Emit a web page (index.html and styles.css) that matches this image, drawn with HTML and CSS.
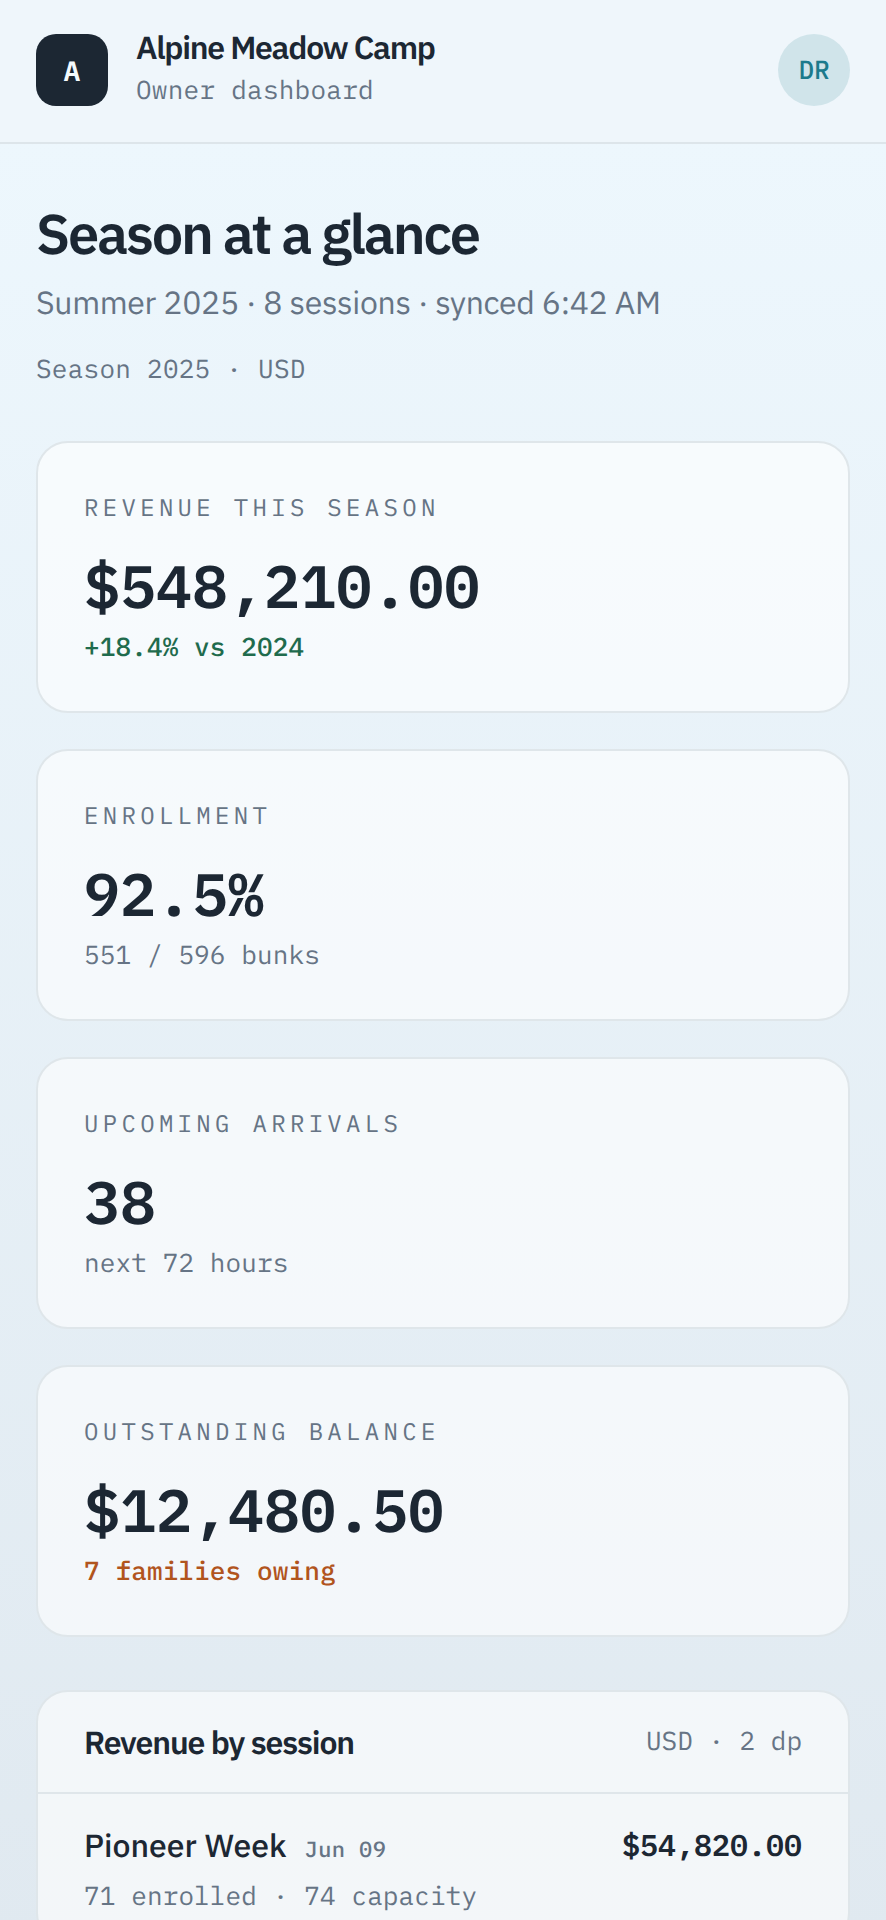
FILE: index.html
```html
<!DOCTYPE html>
<html lang="en">
<head>
  <meta charset="UTF-8">
  <meta name="viewport" content="width=device-width, initial-scale=1.0">
  <title>Alpine Meadow Camp</title>
  <link rel="stylesheet" href="styles.css">
</head>
<body>
  <header class="topbar">
    <div class="brand">
      <div class="brand-mark">A</div>
      <div class="brand-text">
        <div class="brand-name">Alpine Meadow Camp</div>
        <div class="brand-role">Owner dashboard</div>
      </div>
    </div>
    <div class="avatar">DR</div>
  </header>

  <main class="content">
    <section class="intro">
      <h1>Season at a glance</h1>
      <p class="intro-sub">Summer 2025 · 8 sessions · synced 6:42 AM</p>
      <p class="intro-meta">Season 2025 · USD</p>
    </section>

    <section class="stats">
      <div class="card">
        <div class="card-label">REVENUE THIS SEASON</div>
        <div class="card-value">$548,210.00</div>
        <div class="card-note good">+18.4% vs 2024</div>
      </div>
      <div class="card">
        <div class="card-label">ENROLLMENT</div>
        <div class="card-value">92.5%</div>
        <div class="card-note">551 / 596 bunks</div>
      </div>
      <div class="card">
        <div class="card-label">UPCOMING ARRIVALS</div>
        <div class="card-value">38</div>
        <div class="card-note">next 72 hours</div>
      </div>
      <div class="card">
        <div class="card-label">OUTSTANDING BALANCE</div>
        <div class="card-value">$12,480.50</div>
        <div class="card-note warn">7 families owing</div>
      </div>
    </section>

    <section class="panel">
      <div class="panel-head">
        <h2>Revenue by session</h2>
        <span class="panel-meta">USD · 2 dp</span>
      </div>
      <div class="row">
        <div class="row-top">
          <div><span class="row-name">Pioneer Week</span><span class="row-date">Jun 09</span></div>
          <div class="row-amount">$54,820.00</div>
        </div>
        <div class="row-sub">71 enrolled · 74 capacity</div>
      </div>
    </section>
  </main>
</body>
</html>
```

FILE: styles.css
```css
* {
  box-sizing: border-box;
}

html, body {
  margin: 0;
  padding: 0;
}

body {
  min-height: 100vh;
  font-family: "IBM Plex Sans", "Open Sans", sans-serif;
  color: #1c2733;
  background: linear-gradient(180deg, #eef8fe 0%, #e0e9f0 100%);
  text-rendering: geometricPrecision;
}

.topbar {
  display: flex;
  justify-content: space-between;
  align-items: center;
  height: 144px;
  padding: 0 36px 2px;
  background: #eff6fb;
  border-bottom: 2px solid #dde5ea;
}

.brand {
  display: flex;
  align-items: center;
  gap: 28px;
}

.brand-mark {
  width: 72px;
  height: 72px;
  border-radius: 20px;
  background: #1c2733;
  color: #f4fafd;
  display: flex;
  align-items: center;
  justify-content: center;
  font-family: "IBM Plex Mono", "Liberation Mono", monospace;
  font-weight: 600;
  font-size: 28px;
}

.brand-text {
  padding-bottom: 5px;
}

.brand-name {
  font-size: 32px;
  font-weight: 600;
  letter-spacing: -0.04em;
  line-height: 38px;
}

.brand-role {
  margin-top: 7px;
  font-family: "IBM Plex Mono", "Liberation Mono", monospace;
  font-size: 26px;
  letter-spacing: 0.01em;
  line-height: 34px;
  color: #667485;
}

.avatar {
  width: 72px;
  height: 72px;
  border-radius: 50%;
  background: #d0e4ea;
  color: #1c7a8c;
  display: flex;
  align-items: center;
  justify-content: center;
  font-family: "IBM Plex Mono", "Liberation Mono", monospace;
  font-weight: 500;
  font-size: 26px;
}

.content {
  padding: 58px 36px 0;
}

h1 {
  margin: 0;
  font-size: 56px;
  font-weight: 600;
  line-height: 64px;
  letter-spacing: -0.04em;
}

.intro-sub {
  margin: 15px 0 0;
  font-size: 32px;
  letter-spacing: -0.01em;
  line-height: 42px;
  color: #667485;
}

.intro-meta {
  margin: 29px 0 0;
  font-family: "IBM Plex Mono", "Liberation Mono", monospace;
  font-size: 26px;
  letter-spacing: 0.01em;
  line-height: 34px;
  color: #667485;
}

.stats {
  display: flex;
  flex-direction: column;
  gap: 36px;
  margin-top: 55px;
}

.card {
  padding: 48px 46px 47px;
  border: 2px solid #dfe6ea;
  border-radius: 32px;
  background: rgba(255, 255, 255, 0.6);
}

.card-label {
  font-family: "IBM Plex Mono", "Liberation Mono", monospace;
  font-size: 24px;
  line-height: 32px;
  letter-spacing: 0.18em;
  color: #667485;
}

.card-value {
  margin-top: 27px;
  font-family: "IBM Plex Mono", "Liberation Mono", monospace;
  font-size: 60px;
  font-weight: 600;
  line-height: 72px;
}

.card-note {
  margin-top: 8px;
  font-family: "IBM Plex Mono", "Liberation Mono", monospace;
  font-size: 26px;
  letter-spacing: 0.005em;
  line-height: 34px;
  color: #667485;
}

.card-note.good {
  color: #1f6b4d;
  font-weight: 500;
}

.card-note.warn {
  color: #b1541d;
  font-weight: 500;
}

.panel {
  margin-top: 53px;
  border: 2px solid #dfe6ea;
  border-radius: 32px;
  background: rgba(255, 255, 255, 0.6);
}

.panel-head {
  display: flex;
  justify-content: space-between;
  align-items: center;
  height: 102px;
  padding: 0 46px;
  border-bottom: 2px solid #dfe6ea;
}

h2 {
  margin: 0;
  font-size: 32px;
  font-weight: 600;
  letter-spacing: -0.035em;
}

.panel-meta {
  margin-bottom: 3px;
  font-family: "IBM Plex Mono", "Liberation Mono", monospace;
  font-size: 26px;
  color: #667485;
}

.row {
  padding: 30px 46px;
}

.row-top {
  display: flex;
  justify-content: space-between;
  align-items: center;
}

.row-name {
  font-size: 32px;
  font-weight: 500;
}

.row-date {
  margin-left: 18px;
  font-family: "IBM Plex Mono", "Liberation Mono", monospace;
  font-size: 22px;
  font-weight: 500;
  letter-spacing: 0.02em;
  color: #667485;
}

.row-amount {
  font-family: "IBM Plex Mono", "Liberation Mono", monospace;
  font-size: 30px;
  font-weight: 600;
}

.row-sub {
  margin-top: 13px;
  font-family: "IBM Plex Mono", "Liberation Mono", monospace;
  font-size: 26px;
  letter-spacing: 0.005em;
  color: #667485;
}
```
